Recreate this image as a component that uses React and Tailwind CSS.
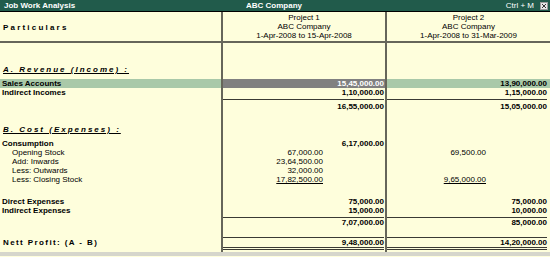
import React from "react";

const LINE = "border-[#66665a]";

// one amount column: inner sub-column + outer (bold) sub-column
const Amt = ({ inner, outer, under, outerUnder, sel, rule, className }) => (
  <div
    className={`grid grid-cols-[1fr_61px] border-l-2 ${LINE} ${className} ${
      sel ? "bg-[#808080] text-white" : ""
    }`}
  >
    {rule ? (
      <div className="col-span-2 bg-[#3a3a34]" />
    ) : (
      <>
        <span className={`text-right ${under ? "underline" : ""}`}>{inner}</span>
        <span className={`text-right font-bold ${outerUnder ? "underline" : ""}`}>{outer}</span>
      </>
    )}
  </div>
);

const Row = ({ label, labelClass = "font-bold pl-[2px]", a = {}, b = {}, hl = false, h = "h-[9px]" }) => (
  <div className={`flex ${h} leading-[9px] ${hl ? "bg-[#a9c9a9]" : ""}`}>
    <div className={`w-[221px] whitespace-nowrap ${labelClass}`}>{label}</div>
    <Amt {...a} className="w-[164px] pr-[1px]" />
    <Amt {...b} className="flex-1 pr-[3px]" />
  </div>
);

const Gap = ({ h }) => <Row h={h} />;
const Rule = () => <Row h="h-[1px]" a={{ rule: true }} b={{ rule: true }} />;

const Heading = ({ children }) => (
  <Row
    h="h-[11px]"
    labelClass="pl-[3px] font-bold italic tracking-[2px] underline underline-offset-[1px]"
    label={children}
  />
);

export default function App() {
  return (
    <div className="w-[550px] h-[257px] overflow-hidden bg-[#fefedc] text-[8px] text-black font-['Liberation_Sans',Arial,sans-serif]">
      {/* title bar */}
      <div className="grid grid-cols-[246px_1fr_auto] items-center h-[12px] bg-[#215b4b] border-b border-black text-white leading-[11px]">
        <span className="pl-[4px] font-bold">Job Work Analysis</span>
        <span className="font-bold">ABC Company</span>
        <div className="flex items-center">
          <span className="mr-[6px]">Ctrl + M</span>
          <span className="flex items-center justify-center w-[8px] h-[8px] mr-[2px] bg-[#e8e8e8] border border-[#9a9a9a]">
            <svg width="6" height="6" viewBox="0 0 6 6">
              <path d="M1 1L5 5M5 1L1 5" stroke="#333" strokeWidth="1" />
            </svg>
          </span>
        </div>
      </div>

      {/* column header */}
      <div className="flex h-[29px] leading-[9px]">
        <div className="w-[221px] pl-[3px] pt-[11px] font-bold tracking-[2.2px]">Particulars</div>
        <div className={`w-[164px] border-l-2 ${LINE} pt-[1px] text-center`}>
          <div>Project 1</div>
          <div>ABC Company</div>
          <div>1-Apr-2008 to 15-Apr-2008</div>
        </div>
        <div className={`flex-1 border-l-2 ${LINE} pt-[1px] text-center`}>
          <div>Project 2</div>
          <div>ABC Company</div>
          <div>1-Apr-2008 to 31-Mar-2009</div>
        </div>
      </div>
      <div className="h-[2px] bg-[#66665a]" />

      <Gap h="h-[22px]" />
      <Heading>A. Revenue (Income) :</Heading>
      <Gap h="h-[3px]" />
      <Row label="Sales Accounts" hl a={{ outer: "15,45,000.00", sel: true }} b={{ outer: "13,90,000.00" }} />
      <Row label="Indirect Incomes" a={{ outer: "1,10,000.00" }} b={{ outer: "1,15,000.00" }} />
      <Gap h="h-[2px]" />
      <Rule />
      <Gap h="h-[2px]" />
      <Row label="" a={{ outer: "16,55,000.00" }} b={{ outer: "15,05,000.00" }} />

      <Gap h="h-[14px]" />
      <Heading>B. Cost (Expenses) :</Heading>
      <Gap h="h-[3px]" />
      <Row label="Consumption" a={{ outer: "6,17,000.00" }} />
      <Row label="Opening Stock" labelClass="pl-[12px]" a={{ inner: "67,000.00" }} b={{ inner: "69,500.00" }} />
      <Row label="Add: Inwards" labelClass="pl-[12px]" a={{ inner: "23,64,500.00" }} />
      <Row label="Less: Outwards" labelClass="pl-[12px]" a={{ inner: "32,000.00" }} />
      <Row
        label="Less: Closing Stock"
        labelClass="pl-[12px]"
        a={{ inner: "17,82,500.00", under: true }}
        b={{ inner: "9,65,000.00", under: true }}
      />

      <Gap h="h-[13px]" />
      <Row label="Direct Expenses" a={{ outer: "75,000.00" }} b={{ outer: "75,000.00" }} />
      <Row label="Indirect Expenses" a={{ outer: "15,000.00" }} b={{ outer: "10,000.00" }} />
      <Gap h="h-[2px]" />
      <Rule />
      <Row label="" a={{ outer: "7,07,000.00" }} b={{ outer: "85,000.00" }} />

      <Gap h="h-[10px]" />
      <Rule />
      <Row
        h="h-[9px]"
        labelClass="pl-[3px] font-bold tracking-[1.4px]"
        label="Nett Profit: (A - B)"
        a={{ outer: "9,48,000.00" }}
        b={{ outer: "14,20,000.00" }}
      />
      <Rule />
      <Gap h="h-[1px]" />
      <Rule />
      <Gap h="h-[2px]" />
      <div className="h-[4px] bg-[#d6d6cc]" />
    </div>
  );
}
